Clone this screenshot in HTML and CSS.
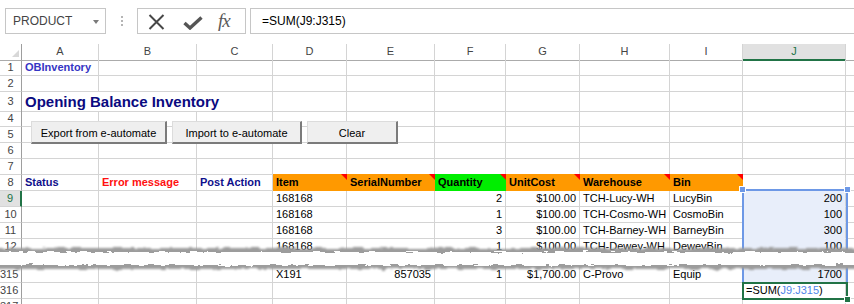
FILE: index.html
```html
<!DOCTYPE html>
<html>
<head>
  <title>OBInventory</title>
  <link rel="stylesheet" href="styles.css">
</head>
<body>

<div class="fbar">
  <div class="namebox">PRODUCT<span class="caret"></span></div>
  <div class="dots"><i></i><i></i><i></i></div>
  <div class="fnbox">
    <svg class="ico-x" width="17" height="16" viewBox="0 0 17 16"><path d="M1.5 1 L15.5 15 M15.5 1 L1.5 15" stroke="#474747" stroke-width="2" fill="none"/></svg>
    <svg class="ico-ok" width="20" height="14" viewBox="0 0 20 14"><path d="M1.5 7 L7 12 L18.5 1.5" stroke="#555" stroke-width="3.4" fill="none"/></svg>
    <span class="fx">fx</span>
  </div>
  <div class="formula">=SUM(J9:J315)</div>
</div>

<div class="sheet">
  <div class="row colhead">
    <div class="corner"><span></span></div>
    <div class="ch">A</div><div class="ch">B</div><div class="ch">C</div><div class="ch">D</div><div class="ch">E</div>
    <div class="ch">F</div><div class="ch">G</div><div class="ch">H</div><div class="ch">I</div><div class="ch on">J</div><div class="ch end"></div>
  </div>

  <div class="row">
    <div class="rh">1</div><div class="c obi">OBInventory</div><div class="c"></div><div class="c"></div><div class="c"></div><div class="c"></div>
    <div class="c"></div><div class="c"></div><div class="c"></div><div class="c"></div><div class="c"></div><div class="c end"></div>
  </div>
  <div class="row">
    <div class="rh">2</div><div class="c"></div><div class="c"></div><div class="c"></div><div class="c"></div><div class="c"></div>
    <div class="c"></div><div class="c"></div><div class="c"></div><div class="c"></div><div class="c"></div><div class="c end"></div>
  </div>
  <div class="row tall">
    <div class="rh">3</div><div class="c title span3">Opening Balance Inventory</div><div class="c"></div><div class="c"></div>
    <div class="c"></div><div class="c"></div><div class="c"></div><div class="c"></div><div class="c"></div><div class="c end"></div>
  </div>
  <div class="row">
    <div class="rh">4</div><div class="c"></div><div class="c"></div><div class="c"></div><div class="c"></div><div class="c"></div>
    <div class="c"></div><div class="c"></div><div class="c"></div><div class="c"></div><div class="c"></div><div class="c end"></div>
  </div>
  <div class="row">
    <div class="rh">5</div><div class="c"></div><div class="c"></div><div class="c"></div><div class="c"></div><div class="c"></div>
    <div class="c"></div><div class="c"></div><div class="c"></div><div class="c"></div><div class="c"></div><div class="c end"></div>
  </div>
  <div class="row">
    <div class="rh">6</div><div class="c"></div><div class="c"></div><div class="c"></div><div class="c"></div><div class="c"></div>
    <div class="c"></div><div class="c"></div><div class="c"></div><div class="c"></div><div class="c"></div><div class="c end"></div>
  </div>
  <div class="row">
    <div class="rh">7</div><div class="c"></div><div class="c"></div><div class="c"></div><div class="c"></div><div class="c"></div>
    <div class="c"></div><div class="c"></div><div class="c"></div><div class="c"></div><div class="c"></div><div class="c end"></div>
  </div>
  <div class="row">
    <div class="rh">8</div>
    <div class="c lbl navy">Status</div><div class="c lbl red">Error message</div><div class="c lbl navy">Post Action</div>
    <div class="c hd">Item</div><div class="c hd">SerialNumber</div><div class="c hd green">Quantity</div>
    <div class="c hd">UnitCost</div><div class="c hd">Warehouse</div><div class="c hd">Bin</div>
    <div class="c"></div><div class="c end"></div>
  </div>
  <div class="row">
    <div class="rh act">9</div><div class="c"></div><div class="c"></div><div class="c"></div>
    <div class="c">168168</div><div class="c"></div><div class="c n">2</div><div class="c n">$100.00</div>
    <div class="c">TCH-Lucy-WH</div><div class="c">LucyBin</div><div class="c n sel">200</div><div class="c end"></div>
  </div>
  <div class="row">
    <div class="rh">10</div><div class="c"></div><div class="c"></div><div class="c"></div>
    <div class="c">168168</div><div class="c"></div><div class="c n">1</div><div class="c n">$100.00</div>
    <div class="c">TCH-Cosmo-WH</div><div class="c">CosmoBin</div><div class="c n sel">100</div><div class="c end"></div>
  </div>
  <div class="row">
    <div class="rh">11</div><div class="c"></div><div class="c"></div><div class="c"></div>
    <div class="c">168168</div><div class="c"></div><div class="c n">3</div><div class="c n">$100.00</div>
    <div class="c">TCH-Barney-WH</div><div class="c">BarneyBin</div><div class="c n sel">300</div><div class="c end"></div>
  </div>
  <div class="row">
    <div class="rh">12</div><div class="c"></div><div class="c"></div><div class="c"></div>
    <div class="c">168168</div><div class="c"></div><div class="c n">1</div><div class="c n">$100.00</div>
    <div class="c">TCH-Dewey-WH</div><div class="c">DeweyBin</div><div class="c n sel">100</div><div class="c end"></div>
  </div>
  <div class="row gap">
    <div class="rh"></div><div class="c"></div><div class="c"></div><div class="c"></div><div class="c"></div><div class="c"></div>
    <div class="c"></div><div class="c"></div><div class="c"></div><div class="c"></div><div class="c sel"></div><div class="c end"></div>
  </div>
  <div class="row">
    <div class="rh wide">315</div><div class="c"></div><div class="c"></div><div class="c"></div>
    <div class="c">X191</div><div class="c n">857035</div><div class="c n">1</div><div class="c n">$1,700.00</div>
    <div class="c">C-Provo</div><div class="c">Equip</div><div class="c n sel">1700</div><div class="c end"></div>
  </div>
  <div class="row">
    <div class="rh wide">316</div><div class="c"></div><div class="c"></div><div class="c"></div><div class="c"></div><div class="c"></div>
    <div class="c"></div><div class="c"></div><div class="c"></div><div class="c"></div>
    <div class="c">=SUM(<span class="ref">J9:J315</span>)</div><div class="c end"></div>
  </div>
  <div class="row">
    <div class="rh wide">317</div><div class="c"></div><div class="c"></div><div class="c"></div><div class="c"></div><div class="c"></div>
    <div class="c"></div><div class="c"></div><div class="c"></div><div class="c"></div><div class="c"></div><div class="c end"></div>
  </div>

  <!-- form buttons floating over the grid -->
  <div class="btn b-export">Export from e-automate</div>
  <div class="btn b-import">Import to e-automate</div>
  <div class="btn b-clear">Clear</div>

  <!-- selection J9:J315 and active cell J316 -->
  <div class="selbox"><span class="hdl tl"></span><span class="hdl tr"></span></div>
  <div class="actbox"><span class="hdl br"></span></div>

  <!-- torn edge between row 12 and row 315 -->
  <svg class="tear" width="874" height="36" viewBox="0 0 874 36">
    <defs>
      <filter id="roughShadow" x="-2%" y="-60%" width="104%" height="220%">
        <feTurbulence type="fractalNoise" baseFrequency="0.09 0.4" numOctaves="3" seed="7" result="noise"/>
        <feDisplacementMap in="SourceGraphic" in2="noise" scale="5" xChannelSelector="R" yChannelSelector="G" result="moved"/>
        <feGaussianBlur in="moved" stdDeviation="1.1"/>
      </filter>
      <filter id="roughWhite" x="-2%" y="-60%" width="104%" height="220%">
        <feTurbulence type="fractalNoise" baseFrequency="0.09 0.4" numOctaves="3" seed="7" result="noise"/>
        <feDisplacementMap in="SourceGraphic" in2="noise" scale="5" xChannelSelector="R" yChannelSelector="G" result="moved"/>
        <feGaussianBlur in="moved" stdDeviation="0.5"/>
      </filter>
    </defs>
    <rect x="0" y="8" width="874" height="21" fill="#9c9c9c" filter="url(#roughShadow)"/>
    <rect x="0" y="12" width="874" height="13" fill="#ffffff" filter="url(#roughWhite)"/>
  </svg>
</div>

</body>
</html>
```

FILE: styles.css
```css
body {
  margin: 0;
  background-color: #fff;
  font-family: "Liberation Sans", Arial, sans-serif;
  font-size: 11px;
  color: #000;
  overflow: hidden;
}

/* formula bar */

.fbar {
  display: flex;
  height: 26px;
  padding: 8px 0 0 5px;
  margin-bottom: 10px;
}

.namebox {
  position: relative;
  width: 101px;
  box-sizing: border-box;
  border: 1px solid #c6c6c6;
  padding-left: 7px;
  display: flex;
  align-items: center;
  font-size: 12px;
  color: #444;
}

.caret {
  position: absolute;
  left: 87px;
  top: 11px;
  border-left: 3.5px solid transparent;
  border-right: 3.5px solid transparent;
  border-top: 4px solid #7a7a7a;
}

.dots {
  width: 31px;
  display: flex;
  flex-direction: column;
  align-items: center;
  justify-content: center;
  gap: 2px;
}

.dots i {
  width: 2px;
  height: 2px;
  background: #b5b5b5;
}

.fnbox {
  width: 109px;
  box-sizing: border-box;
  border: 1px solid #c6c6c6;
  display: flex;
  align-items: center;
  padding-left: 10px;
}

.ico-x {
  margin-top: 1px;
}

.ico-ok {
  margin-left: 18px;
  margin-top: 3px;
}

.fx {
  margin-left: 15px;
  font-family: "Liberation Serif", "Times New Roman", serif;
  font-style: italic;
  font-size: 19px;
  color: #5a5a5a;
  letter-spacing: -1px;
}

.formula {
  flex: 1;
  margin-left: 4px;
  margin-right: -2px;
  border: 1px solid #c6c6c6;
  padding-left: 11px;
  display: flex;
  align-items: center;
  font-size: 12px;
}

/* sheet grid */

.sheet {
  position: relative;
  width: 854px;
  height: 260px;
  overflow: hidden;
}

.row {
  display: grid;
  grid-template-columns: 22px 77px 98px 76px 74px 88px 71px 74px 90px 73px 103px 8px;
  height: 16px;
}

.row.tall {
  height: 19px;
}

.row.gap {
  height: 12px;
}

.c,
.rh,
.ch,
.corner {
  box-sizing: border-box;
  border-right: 1px solid #d4d4d4;
  border-bottom: 1px solid #d4d4d4;
  line-height: 15px;
  white-space: nowrap;
}

.c {
  position: relative;
  padding: 0 3px;
}

.c.end {
  border-right: none;
}

.row.gap .c,
.row.gap .rh {
  border-bottom: none;
}

.n {
  text-align: right;
}

.rh {
  border-right-color: #9e9e9e;
  text-align: center;
  color: #444;
}

.rh.wide {
  text-align: right;
  padding-right: 4px;
}

.rh.act {
  background: #e1e1e1;
  border-right: 2px solid #217346;
  color: #217346;
}

.colhead .ch,
.colhead .corner {
  border-bottom-color: #ababab;
  text-align: center;
  color: #444;
}

.ch.on {
  background: #e1e1e1;
  border-bottom: 2px solid #217346;
  color: #217346;
}

.ch.end {
  border-right: none;
}

.corner {
  position: relative;
  border-right-color: #9e9e9e;
}

.corner span {
  position: absolute;
  right: 2px;
  bottom: 3px;
  border-left: 7px solid transparent;
  border-bottom: 7px solid #d8d8d8;
}

/* cell content */

.obi {
  font-weight: bold;
  color: #3535c4;
}

.title {
  grid-column: span 3;
  font-size: 15px;
  font-weight: bold;
  color: #0a0a80;
  line-height: 17px;
  padding-top: 1px;
}

.row.tall .c,
.row.tall .rh {
  line-height: 18px;
}

.lbl {
  font-weight: bold;
}

.navy {
  color: #0f0f8c;
}

.red {
  color: #ff1010;
}

.hd {
  font-weight: bold;
  background: #ff9900;
  border-color: #ff9900;
  box-shadow: 0 -1px 0 #ff9900;
}

.hd.green {
  background: #00ee00;
  border-color: #00ee00;
  box-shadow: 0 -1px 0 #00ee00;
}

.hd:after {
  content: "";
  position: absolute;
  top: -1px;
  right: -1px;
  border-left: 6px solid transparent;
  border-top: 6px solid #ff0000;
}

.sel {
  background: #e8eefa;
  border-bottom-color: #e8eefa;
}

.ref {
  color: #4f86e8;
}

/* buttons */

.btn {
  position: absolute;
  top: 77px;
  height: 23px;
  box-sizing: border-box;
  background: #efefef;
  border-top: 1px solid #dcdcdc;
  border-left: 1px solid #dcdcdc;
  border-right: 2px solid #7b7b7b;
  border-bottom: 2px solid #7b7b7b;
  display: flex;
  align-items: center;
  justify-content: center;
  font-size: 11px;
  padding-top: 1px;
}

.b-export {
  left: 31px;
  width: 136px;
}

.b-import {
  left: 172px;
  width: 130px;
}

.b-clear {
  left: 307px;
  width: 91px;
}

/* selection frames */

.selbox {
  position: absolute;
  left: 742px;
  top: 145px;
  width: 106px;
  height: 94px;
  box-sizing: border-box;
  border: 2px solid #6d98e6;
  border-bottom: none;
}

.actbox {
  position: absolute;
  left: 742px;
  top: 238px;
  width: 106px;
  height: 18px;
  box-sizing: border-box;
  border: 2px solid #217346;
}

.hdl {
  position: absolute;
  width: 5px;
  height: 5px;
  background: #6d98e6;
  border: 1px solid #fff;
}

.hdl.tl {
  left: -5px;
  top: -5px;
}

.hdl.tr {
  right: -5px;
  top: -5px;
}

.actbox .hdl {
  background: #217346;
}

.hdl.br {
  right: -5px;
  bottom: -5px;
}

.tear {
  position: absolute;
  left: -10px;
  top: 196px;
}
```
